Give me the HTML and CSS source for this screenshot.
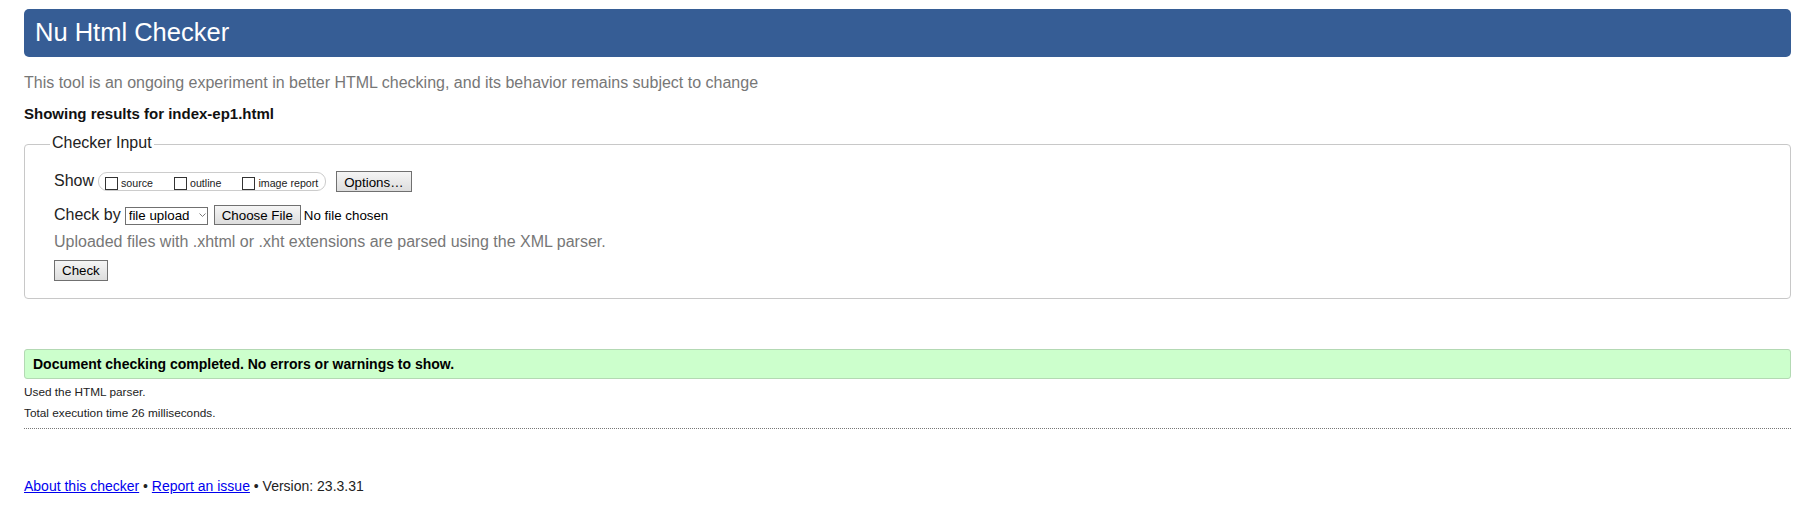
FILE: index.html
```html
<!DOCTYPE html>
<html lang="en">
<head>
<meta charset="utf-8">
<title>Showing results for index-ep1.html - Nu Html Checker</title>
<link rel="stylesheet" href="styles.css">
</head>
<body>
<h1 class="title">Nu Html Checker</h1>
<p class="tagline">This tool is an ongoing experiment in better HTML checking, and its behavior remains subject to change</p>
<h2 class="results-for">Showing results for index-ep1.html</h2>
<form class="checker-form">
  <fieldset class="checker-input">
    <legend class="checker-legend">Checker Input</legend>
    <div class="row row-show">
      <span class="field-label">Show</span>
      <span class="show-group">
        <label class="opt"><input type="checkbox"><span>source</span></label>
        <label class="opt"><input type="checkbox"><span>outline</span></label>
        <label class="opt"><input type="checkbox"><span>image report</span></label>
      </span>
      <button type="button" class="btn btn-options">Options…</button>
    </div>
    <div class="row row-checkby">
      <span class="field-label">Check by</span>
      <span class="select-wrap">
        <select class="select"><option>file upload</option></select>
        <svg class="chevron" width="7" height="4" viewBox="0 0 7 4"><polyline points="0.5,0.5 3.5,3.5 6.5,0.5" fill="none" stroke="#7a7a7a" stroke-width="1"/></svg>
      </span>
      <button type="button" class="btn btn-file">Choose File</button>
      <span class="file-status">No file chosen</span>
    </div>
    <p class="hint">Uploaded files with .xhtml or .xht extensions are parsed using the XML parser.</p>
    <div class="row row-submit">
      <button type="button" class="btn btn-check">Check</button>
    </div>
  </fieldset>
</form>
<div class="success">Document checking completed. No errors or warnings to show.</div>
<p class="meta">Used the HTML parser.</p>
<p class="meta">Total execution time 26 milliseconds.</p>
<hr class="sep">
<p class="footer"><a href="#">About this checker</a> • <a href="#">Report an issue</a> • Version: 23.3.31</p>
</body>
</html>
```
FILE: styles.css
```css
html { background: #fff; }
body {
  margin: 0;
  padding: 9px 18px 0 24px;
  font-family: "Liberation Sans", Arial, sans-serif;
  color: #000;
}
.title {
  margin: 0;
  height: 48px;
  box-sizing: border-box;
  padding: 0 11px 2px;
  line-height: 46px;
  font-size: 25.5px;
  font-weight: normal;
  color: #fff;
  background: #365d95;
  border-radius: 5px;
}
.tagline {
  margin: 17px 0 0;
  font-size: 16px;
  line-height: 18px;
  color: #777;
}
.results-for {
  margin: 13px 0 0;
  font-size: 15px;
  line-height: 17px;
  font-weight: bold;
  color: #111;
}
.checker-form { margin: 0; }
.checker-input {
  margin: 11px 0 0;
  padding: 15px 28px 17px 29px;
  border: 1px solid #c8c8c8;
  border-radius: 4px;
  min-width: 0;
}
.checker-legend {
  font-size: 16px;
  line-height: 19px;
  padding: 0 2px 4px;
  margin-left: -4px;
  color: #222;
}
.row {
  display: flex;
  align-items: center;
}
.row-show { height: 21px; }
.row-checkby { height: 20px; margin-top: 13px; }
.row-submit { height: 21px; margin-top: 9px; }
.field-label {
  font-size: 16px;
  line-height: 18px;
  color: #222;
}
.row-show .field-label { margin-bottom: 2px; }
.show-group {
  display: flex;
  align-items: center;
  margin-left: 4px;
  height: 19px;
  box-sizing: border-box;
  border: 1px solid #ccc;
  border-radius: 9px;
  padding: 0 7px 0 2px;
}
.opt {
  display: flex;
  align-items: center;
  margin-right: 17px;
  font-size: 10.67px;
  line-height: 12px;
  color: #222;
}
.opt:last-child { margin-right: 0; }
.opt input {
  appearance: none;
  -webkit-appearance: none;
  width: 13px;
  height: 13px;
  margin: 4px 3px 0 4px;
  border: 1px solid #333;
  background: #fff;
  box-sizing: border-box;
  border-radius: 0;
}
.opt span { margin-top: 2px; }
.btn {
  font-family: "Liberation Sans", Arial, sans-serif;
  font-size: 13.33px;
  line-height: 15px;
  color: #000;
  border: 1px solid #707070;
  background: linear-gradient(#f5f5f5, #dddddd);
  padding: 2px 7px;
  border-radius: 0;
  box-sizing: border-box;
  margin: 0;
}
.btn-options { height: 21px; margin-left: 10px; padding-top: 3px; padding-bottom: 1px; }
.btn-file { height: 20px; margin-left: 6px; }
.btn-check { height: 21px; }
.select-wrap {
  position: relative;
  display: inline-flex;
  margin-left: 4px;
  margin-top: 2px;
}
.select {
  appearance: none;
  -webkit-appearance: none;
  width: 83px;
  height: 18px;
  box-sizing: border-box;
  margin: 0;
  padding: 0 0 0 3px;
  border: 1px solid #707070;
  border-radius: 0;
  background: #fff;
  font-family: "Liberation Sans", Arial, sans-serif;
  font-size: 13.33px;
  line-height: 16px;
  color: #000;
}
.chevron {
  position: absolute;
  left: 74px;
  top: 6px;
}
.file-status {
  margin-left: 3px;
  font-size: 13.33px;
  line-height: 15px;
  color: #000;
}
.hint {
  margin: 8px 0 0;
  font-size: 16px;
  line-height: 18px;
  color: #777;
}
.success {
  margin-top: 50px;
  border: 1px solid #b3d9b3;
  background: #ccffcc;
  border-radius: 3px;
  padding: 6px 8px;
  font-size: 14px;
  line-height: 16px;
  font-weight: bold;
  color: #000;
}
.meta {
  margin: 6px 0 0;
  font-size: 11.8px;
  line-height: 14.6px;
  color: #222;
}
.sep {
  margin: 8px 0 0;
  height: 0;
  border: 0;
  border-top: 1px dotted #777;
}
.footer {
  margin: 49px 0 0;
  font-size: 14px;
  line-height: 16px;
  color: #222;
}
.footer a { color: #0000ee; }
```
